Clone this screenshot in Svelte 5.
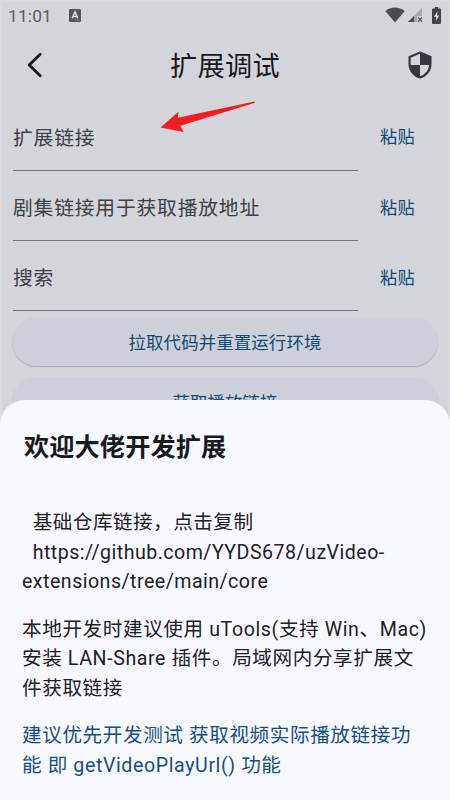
<script lang="ts">
	const fields = ['扩展链接', '剧集链接用于获取播放地址', '搜索'];
	const actions = ['拉取代码并重置运行环境', '获取播放链接'];
	const repoUrl = 'https://github.com/YYDS678/uzVideo-extensions/tree/main/core';
</script>

<div class="screen">
	<div class="status-bar">
		<span class="clock">11:01</span>
		<svg class="app-badge" width="12" height="13" viewBox="0 0 12 13">
			<rect width="12" height="13" rx="1.2" fill="#55565a" />
			<path d="M3.2 9.2 L6 2.8 L8.8 9.2 M4.2 7.4 H7.8" fill="none" stroke="#dedfe3" stroke-width="1.5" />
			<path d="M6 11 H10.5" stroke="#909196" stroke-width="1" />
		</svg>
		<div class="status-icons">
			<svg width="20" height="16" viewBox="0 0 20 16">
				<path d="M0.4 4.2 C5.5 -0.8 14.5 -0.8 19.6 4.2 L10 15.6 Z" fill="#4c4d51" />
			</svg>
			<svg width="15" height="15" viewBox="0 0 15 15">
				<path d="M0 14 L14 0 V8 H9 V14 Z" fill="#a5a6ab" />
				<path d="M0 14 L6 8 V14 Z" fill="#4c4d51" />
				<path d="M10 9.5 L14 13.7 M14 9.5 L10 13.7" stroke="#55565a" stroke-width="1.3" />
			</svg>
			<svg width="9" height="17" viewBox="0 0 9 17">
				<path d="M2.8 0 H6.2 V1.6 H8 Q9 1.6 9 2.6 V16 Q9 17 8 17 H1 Q0 17 0 16 V2.6 Q0 1.6 1 1.6 H2.8 Z" fill="#434448" />
				<path d="M5.6 4.4 L1.9 9.8 H4.2 V14 L7.2 8.5 H5 Z" fill="#e0e1e5" />
			</svg>
		</div>
	</div>

	<header class="app-bar">
		<button class="icon-button" aria-label="返回">
			<svg width="16" height="26" viewBox="0 0 16 26">
				<path d="M13.2 2.3 L2.2 13 L13.2 23.7" fill="none" stroke="#17191c" stroke-width="2.9" stroke-linecap="round" stroke-linejoin="round" />
			</svg>
		</button>
		<h1>扩展调试</h1>
		<button class="icon-button" aria-label="安全">
			<svg width="24" height="28" viewBox="0 0 24 28">
				<path d="M12 1.6 L22.4 6 V13 C22.4 19.5 18 24.7 12 26.4 C6 24.7 1.6 19.5 1.6 13 V6 Z" fill="#d4d5da" stroke="#34383e" stroke-width="2.2" />
				<path d="M12 1.6 L22.4 6 V14 H12 Z M12 14 V26.4 C6 24.7 1.9 20 1.6 14 Z" fill="#34383e" />
			</svg>
		</button>
	</header>

	<main>
		{#each fields as label}
			<div class="field-row">
				<div class="field">{label}</div>
				<button class="paste">粘贴</button>
			</div>
		{/each}

		<div class="actions">
			{#each actions as action}
				<button class="pill">{action}</button>
			{/each}
		</div>
	</main>

	<svg class="pointer" width="97" height="34" viewBox="0 0 97 34">
		<path d="M0.5 27.5 L18.5 11.8 L17.8 17.8 L94.5 1.5 L95 2.8 L20.3 25.8 L23.8 32 Z" fill="#f01d24" />
	</svg>

	<section class="sheet">
		<h2>欢迎大佬开发扩展</h2>
		<p class="repo">{'\u00a0\u00a0基础仓库链接，点击复制'}<br />{'\u00a0\u00a0' + repoUrl}</p>
		<p>本地开发时建议使用 uTools(支持 Win、Mac)安装 LAN-Share 插件。局域网内分享扩展文件获取链接</p>
		<p class="tip">建议优先开发测试 获取视频实际播放链接功能 即 getVideoPlayUrl() 功能</p>
	</section>
</div>

<style>
	:global(body) {
		margin: 0;
		background: #d4d5da;
	}

	.screen {
		position: relative;
		width: 450px;
		height: 800px;
		box-sizing: border-box;
		overflow: hidden;
		display: flex;
		flex-direction: column;
		background: #d4d5da;
		box-shadow: inset 2px 2px #dadbe0, inset -1px 0 #dadbe0;
		color: #17191c;
		font-family: Roboto, 'Noto Sans CJK SC', sans-serif;
	}

	button {
		border: 0;
		padding: 0;
		background: none;
		font: inherit;
		color: #124b75;
	}

	.status-bar {
		height: 32px;
		flex: none;
		display: flex;
		align-items: center;
		padding: 0 9px 0 8px;
	}

	.clock {
		width: 61px;
		font-size: 17.3px;
		letter-spacing: 0.2px;
		color: #5b5c61;
	}

	.app-badge {
		margin-top: -2px;
	}

	.status-icons {
		display: flex;
		align-items: center;
		gap: 4px;
		margin-left: auto;
		margin-top: -2px;
	}

	.status-icons svg:first-child {
		margin-right: -1px;
	}

	.status-icons svg:last-child {
		margin-left: 5px;
	}

	.app-bar {
		height: 68px;
		flex: none;
		display: flex;
		align-items: center;
		justify-content: space-between;
		padding: 0 18px 0 27px;
	}

	.icon-button {
		display: flex;
		margin-top: -2px;
	}

	h1 {
		margin: 1px 0 0 -1px;
		font-size: 27.2px;
		line-height: 34px;
		font-weight: 400;
		letter-spacing: 0.3px;
	}

	main {
		padding: 0 12px 0 13px;
	}

	.field-row {
		display: flex;
		align-items: center;
		height: 70px;
	}

	.field-row:first-child {
		height: 71px;
	}

	.field {
		width: 345px;
		height: 100%;
		box-sizing: border-box;
		display: flex;
		align-items: center;
		padding-top: 2px;
		border-bottom: 1px solid #74777e;
		font-size: 19.8px;
		letter-spacing: 0.8px;
		white-space: nowrap;
		color: #3d4045;
	}

	.paste {
		flex: 1;
		margin-left: -1px;
		font-size: 17.2px;
		letter-spacing: 0.2px;
	}

	.actions {
		display: flex;
		flex-direction: column;
		gap: 11px;
		padding-top: 6px;
		margin-left: -1px;
	}

	.pill {
		height: 49px;
		border-radius: 25px;
		background: #cdd0d8;
		box-shadow: 0 1px 1px #a9acb4;
		font-size: 17.4px;
		letter-spacing: 0.15px;
	}

	.pointer {
		position: absolute;
		left: 160px;
		top: 100px;
	}

	.sheet {
		position: absolute;
		inset: 400px 0 0;
		padding: 32px 22px 0;
		border-radius: 25px 25px 0 0;
		background: #f8f9ff;
	}

	h2 {
		margin: 0 0 44px 2px;
		font-size: 25.2px;
		line-height: 32px;
		font-weight: 700;
		letter-spacing: 0.1px;
	}

	p {
		margin: 0 0 18px;
		font-size: 19.6px;
		line-height: 29.5px;
		letter-spacing: 0.6px;
		color: #1d2025;
	}

	.repo {
		letter-spacing: 0.48px;
		overflow-wrap: break-word;
	}

	.tip {
		color: #14507e;
	}
</style>
